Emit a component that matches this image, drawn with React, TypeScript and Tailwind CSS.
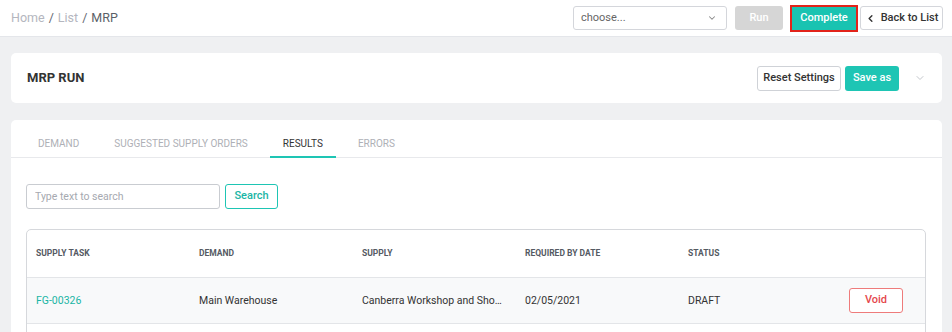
import { ChevronDown, ChevronLeft } from "lucide-react";

const font = { fontFamily: "Roboto, 'Noto Sans', sans-serif" };

const tabs = ["Demand", "Suggested Supply Orders", "Results", "Errors"];
const columns = ["Supply Task", "Demand", "Supply", "Required By Date", "Status"];

function Header() {
  return (
    <header className="h-[37px] bg-white border-b border-[#e4e6ea] flex items-center justify-between pl-[11px] pr-[9px]">
      <nav className="text-[12.5px] text-[#b4b6be] flex items-center gap-[4px]">
        <span>Home</span>
        <span className="text-[#666a73]">/</span>
        <span>List</span>
        <span className="text-[#666a73]">/</span>
        <span className="text-[#5b5f68]">MRP</span>
      </nav>
      <div className="flex items-center">
        <div className="w-[154px] h-[24px] border border-[#d4d6db] rounded-[3px] flex items-center justify-between pl-[7px] pr-[9px] text-[11px] text-[#666]">
          <span>choose...</span>
          <ChevronDown size={10} strokeWidth={2.5} className="text-[#888]" />
        </div>
        <button className="ml-[8px] w-[48px] h-[24px] rounded-[3px] bg-[#d6d6d6] text-white text-[11px] font-medium">
          Run
        </button>
        <button className="ml-[7px] w-[68px] h-[27px] border-2 border-[#e2231a] bg-[#19c3b1] text-white text-[11px] font-medium">
          Complete
        </button>
        <button className="ml-[2px] w-[83px] h-[24px] rounded-[3px] border border-[#d4d6db] bg-white text-[11px] font-medium text-[#333] flex items-center justify-center gap-[5px]">
          <ChevronLeft size={11} strokeWidth={3} />
          Back to List
        </button>
      </div>
    </header>
  );
}

function RunCard() {
  return (
    <section className="h-[50px] bg-white rounded-[5px] flex items-center justify-between pl-[16px] pr-[16px]">
      <h1 className="text-[13px] font-bold text-[#333]">MRP RUN</h1>
      <div className="flex items-center">
        <button className="w-[84px] h-[25px] rounded-[3px] border border-[#cfd2d7] bg-white text-[11px] font-medium text-[#333]">
          Reset Settings
        </button>
        <button className="ml-[4px] w-[54px] h-[25px] rounded-[3px] bg-[#1ec5b4] text-white text-[11px] font-medium">
          Save as
        </button>
        <ChevronDown size={12} strokeWidth={2} className="ml-[15px] text-[#c4c7cc]" />
      </div>
    </section>
  );
}

function ResultsCard() {
  return (
    <section className="mt-[17px] bg-white rounded-t-[5px]">
      <div className="flex gap-[9px] pl-[14px] border-b border-[#e8e9ec] h-[38px] items-end">
        {tabs.map((t) => (
          <div
            key={t}
            className={
              t === "Results"
                ? "px-[13px] pb-[5px] -mb-px text-[10px] uppercase text-[#333] border-b-2 border-[#1ec5b4]"
                : "px-[13px] pb-[5px] -mb-px text-[10px] uppercase text-[#aeb0b6] border-b-2 border-transparent"
            }
          >
            {t}
          </div>
        ))}
      </div>

      <div className="px-[15px] pt-[26px]">
        <div className="flex items-center gap-[5px]">
          <input
            placeholder="Type text to search"
            className="w-[194px] h-[25px] border border-[#c9ccd1] rounded-[3px] px-[8px] text-[10.5px] placeholder:text-[#a6a9b0] outline-none"
          />
          <button className="w-[53px] h-[25px] rounded-[3px] border border-[#1ec5b4] text-[#1ab5a5] text-[11px] font-medium">
            Search
          </button>
        </div>

        <div className="mt-[20px] mr-px border border-[#d6d8dc] rounded-t-[5px]">
          <div className="flex h-[47px] items-center text-[8.5px] font-bold uppercase text-[#555a63]">
            {columns.map((c) => (
              <div key={c} className="w-[163px] pl-[9px]">
                {c}
              </div>
            ))}
          </div>
          <div className="flex h-[47px] items-center bg-[#f8f9fa] border-t border-[#e3e5e8] border-b text-[10.5px] text-[#333]">
            <div className="w-[163px] pl-[9px] text-[#1ab5a5]">FG-00326</div>
            <div className="w-[163px] pl-[9px]">Main Warehouse</div>
            <div className="w-[163px] pl-[9px] pr-[8px] truncate">Canberra Workshop and Showroom</div>
            <div className="w-[163px] pl-[9px]">02/05/2021</div>
            <div className="w-[163px] pl-[9px]">DRAFT</div>
            <div className="flex-1 flex justify-end pr-[22px]">
              <button className="w-[54px] h-[25px] rounded-[3px] border border-[#ee7b7b] bg-white text-[#e5484d] text-[11px] font-medium">
                Void
              </button>
            </div>
          </div>
          <div className="h-[20px]" />
        </div>
      </div>
    </section>
  );
}

export default function App() {
  return (
    <div style={font} className="w-[952px] h-[332px] overflow-hidden bg-[#eff0f2]">
      <Header />
      <main className="pl-[11px] pr-[10px] pt-[16px]">
        <RunCard />
        <ResultsCard />
      </main>
    </div>
  );
}
